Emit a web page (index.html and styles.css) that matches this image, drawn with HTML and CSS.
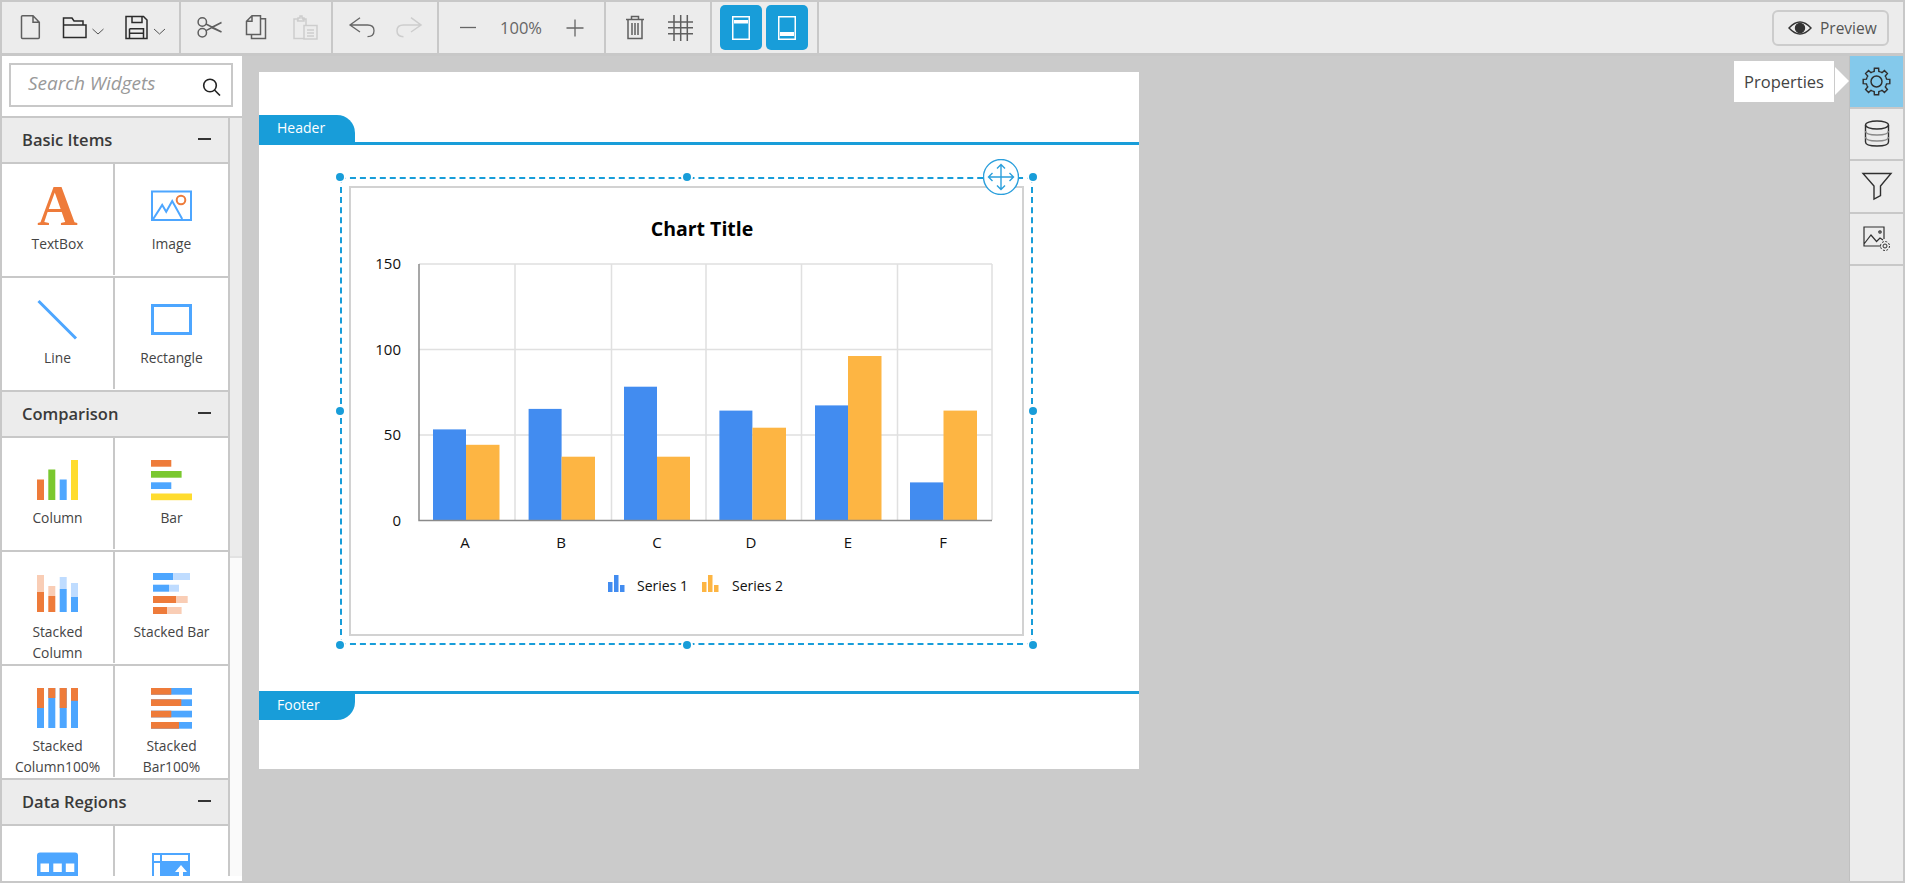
FILE: index.html
```html
<!DOCTYPE html>
<html lang="en">
<head>
<meta charset="utf-8">
<title>Report Designer</title>
<link rel="stylesheet" href="styles.css">
</head>
<body>
<div class="app">
  <header class="toolbar">
    <div class="tb-group g1">
      <svg class="i-new ic" viewBox="0 0 22 26"><path d="M2.5 .8H13L19.3 7.2V22.6Q19.3 23.6 18.3 23.6H2.5Q1.5 23.6 1.5 22.6V1.8Q1.5 .8 2.5 .8ZM13 .8V7.2H19.3"/></svg>
      <svg class="i-open ic-dark" viewBox="0 0 44 26"><path d="M2.5 22.5V3H11L13 6H22V10M2.5 10H25V22.5H2.5Z"/><path class="chev" d="M31.5 14L37 19L42.5 14"/></svg>
      <svg class="i-save ic-dark" viewBox="0 0 43 26"><path d="M2 1.5H19.5L23 5V23.5H2ZM8 1.5V7.5H18V1.5M5.5 13.7H19.5V23.5M5.5 13.7V23.5M5.5 18.3H19.5"/><path class="chev" d="M30 14L35.5 19L41 14"/></svg>
    </div>
    <div class="tb-group g2">
      <svg class="i-cut ic" viewBox="0 0 27 26"><circle cx="6.3" cy="7" r="4.2"/><circle cx="6.3" cy="17.7" r="4.2"/><path d="M10 9L25.5 17L15 12.2M10 15.7L25.5 7.5L15 12.6"/></svg>
      <svg class="i-copy ic" viewBox="0 0 24 26"><path d="M7 .8H15.5V19.5H1.5V6.3ZM7 .8V6.3H1.5M15.5 3.8H20.5V23.6H6.5V19.5"/></svg>
      <svg class="i-paste ic-off" viewBox="0 0 28 26"><path d="M7 4H3V23.5H13M15 10V4H11M7 5.5V3H9V1H11V3H13V6H6ZM13 10.5H26V24H13ZM16 15H23M16 18H23M16 21H23"/></svg>
    </div>
    <div class="tb-group g3">
      <svg class="i-arrow ic-thin" viewBox="0 0 28 26"><path d="M12 2.7L2 10L12 17M2.5 10H19.5Q26 10 26 15.7T19.5 21.7"/></svg>
      <svg class="i-arrow ic-off" viewBox="0 0 28 26"><path d="M16 2.7L26 10L16 17M25.500 10H8.500Q2 10 2 15.700T8.500 21.700"/></svg>
    </div>
    <div class="tb-group g4">
      <svg class="i-minus ic-thin" viewBox="0 0 20 26"><path d="M2 12.500H18"/></svg>
      <span class="zoom-val">100%</span>
      <svg class="i-plus ic-thin" viewBox="0 0 22 26"><path d="M2.500 13H19.500M11 4.500V21.500"/></svg>
    </div>
    <div class="tb-group g5">
      <svg class="i-trash ic" viewBox="0 0 20 25"><path d="M1 4.500H19M6.500 4V1.500H13.500V4M3 4.500V23.500H17V4.500M7 8V20M10 8V20M13 8V20"/></svg>
      <svg class="i-grid ic" viewBox="0 0 25 26"><path d="M6 0V26M12.700 0V26M19.300 0V26M0 7H25M0 12.700H25M0 18.700H25"/></svg>
    </div>
    <div class="tb-group g6">
      <button class="view-btn"><svg class="i-view" viewBox="0 0 18 24"><rect class="view-frame" x=".75" y=".75" width="16.500" height="22.500"/><rect class="view-bar" x="2" y="4" width="14" height="3.500"/></svg></button>
      <button class="view-btn"><svg class="i-view" viewBox="0 0 18 24"><rect class="view-frame" x=".75" y=".75" width="16.500" height="22.500"/><rect class="view-bar" x="2" y="16" width="14" height="4"/></svg></button>
    </div>
    <div class="tb-fill">
      <button class="preview">
        <svg class="i-eye" viewBox="0 0 24 16"><path d="M1 8Q12 -4 23 8Q12 20 1 8Z"/><circle cx="12" cy="8" r="4.500"/></svg>
        <span>Preview</span>
      </button>
    </div>
  </header>

  <div class="main">
    <aside class="sidebar">
      <div class="search-wrap">
        <div class="search">
          <span class="search-text">Search Widgets</span>
          <svg class="i-search" viewBox="0 0 20 18"><circle cx="8" cy="7.500" r="6.300"/><path d="M12.500 12L18 17.500"/></svg>
        </div>
      </div>
      <div class="palette">
        <div class="groups">
          <div class="group-head"><span>Basic Items</span><i class="collapse"></i></div>
          <div class="row">
            <div class="cell"><svg class="wi" viewBox="0 0 41 41"><text class="wi-a" x="20.500" y="39" text-anchor="middle">A</text></svg><span class="lbl">TextBox</span></div>
            <div class="cell"><svg class="wi" viewBox="0 0 41 41"><rect class="s-blue" x="1" y="5.500" width="39" height="28.500"/><path class="s-blue" d="M2.200 33L11.200 19L15.200 25.700L21.200 15L31.200 33"/><circle class="s-orange" cx="30" cy="14" r="4.300"/></svg><span class="lbl">Image</span></div>
          </div>
          <div class="row">
            <div class="cell"><svg class="wi" viewBox="0 0 41 41"><path class="s-blue3" d="M1.500 1L39 38.500"/></svg><span class="lbl">Line</span></div>
            <div class="cell"><svg class="wi" viewBox="0 0 41 41"><rect class="s-blue3" x="1.500" y="5.500" width="38" height="28"/></svg><span class="lbl">Rectangle</span></div>
          </div>
          <div class="group-head"><span>Comparison</span><i class="collapse"></i></div>
          <div class="row">
            <div class="cell"><svg class="wi" viewBox="0 0 41 41"><rect class="f-orange" x="0" y="19.500" width="7" height="20.500"/><rect class="f-green" x="11.300" y="9.500" width="7" height="30.500"/><rect class="f-blue" x="22.700" y="19.500" width="7" height="20.500"/><rect class="f-yellow" x="34" y="0" width="7" height="40"/></svg><span class="lbl">Column</span></div>
            <div class="cell"><svg class="wi" viewBox="0 0 41 41"><rect class="f-orange" y="0" width="20.300" height="6.700"/><rect class="f-green" y="11" width="30.600" height="6.700"/><rect class="f-blue" y="22.300" width="20.300" height="6.700"/><rect class="f-yellow" y="33.500" width="41" height="6.700"/></svg><span class="lbl">Bar</span></div>
          </div>
          <div class="row">
            <div class="cell"><svg class="wi" viewBox="0 0 41 41"><rect class="f-orange-l" x="0" y="1" width="7" height="17"/><rect class="f-orange" x="0" y="18" width="7" height="20"/><rect class="f-orange-l" x="11.300" y="12" width="7" height="10"/><rect class="f-orange" x="11.300" y="22" width="7" height="16"/><rect class="f-blue-l" x="22.700" y="3" width="7" height="12"/><rect class="f-blue" x="22.700" y="15" width="7" height="23"/><rect class="f-blue-l" x="34" y="9" width="7" height="14"/><rect class="f-blue" x="34" y="23" width="7" height="15"/></svg><span class="lbl">Stacked<br>Column</span></div>
            <div class="cell"><svg class="wi wi-sb" viewBox="0 0 41 41"><rect class="f-blue" x="2" y="-1" width="20.300" height="7"/><rect class="f-blue-l" x="22.300" y="-1" width="16.700" height="7"/><rect class="f-blue" x="2" y="10.700" width="16" height="7"/><rect class="f-blue-l" x="18" y="10.700" width="10" height="7"/><rect class="f-orange" x="2" y="22" width="23" height="7"/><rect class="f-orange-l" x="25" y="22" width="11.700" height="7"/><rect class="f-orange" x="2" y="33" width="14.300" height="7"/><rect class="f-orange-l" x="16.300" y="33" width="14.300" height="7"/></svg><span class="lbl">Stacked Bar</span></div>
          </div>
          <div class="row">
            <div class="cell"><svg class="wi" viewBox="0 0 41 41"><rect class="f-blue" x="0" y="0" width="7" height="40"/><rect class="f-orange" x="0" y="0" width="7" height="20"/><rect class="f-blue" x="11.300" y="0" width="7" height="40"/><rect class="f-orange" x="11.300" y="0" width="7" height="10"/><rect class="f-blue" x="22.700" y="0" width="7" height="40"/><rect class="f-orange" x="22.700" y="0" width="7" height="20"/><rect class="f-blue" x="34" y="0" width="7" height="40"/><rect class="f-orange" x="34" y="0" width="7" height="12.800"/></svg><span class="lbl">Stacked<br>Column100%</span></div>
            <div class="cell"><svg class="wi" viewBox="0 0 41 41"><rect class="f-blue" y="0" width="41" height="6.700"/><rect class="f-orange" y="0" width="20.300" height="6.700"/><rect class="f-blue" y="11.300" width="41" height="6.700"/><rect class="f-orange" y="11.300" width="30.300" height="6.700"/><rect class="f-blue" y="22.700" width="41" height="6.700"/><rect class="f-orange" y="22.700" width="20.300" height="6.700"/><rect class="f-blue" y="34" width="41" height="6.700"/><rect class="f-orange" y="34" width="28" height="6.700"/></svg><span class="lbl">Stacked<br>Bar100%</span></div>
          </div>
          <div class="group-head"><span>Data Regions</span><i class="collapse"></i></div>
          <div class="row">
            <div class="cell"><svg class="wi" viewBox="0 0 41 41"><rect class="f-blue" x="0" y="4.500" width="41" height="36" rx="3"/><path class="f-white" d="M3.500 15.500H12V24H3.500ZM16.300 15.500H24.800V24H16.300ZM28.800 15.500H37.300V24H28.800ZM3.500 28H12V36H3.500ZM16.300 28H24.800V36H16.300ZM28.800 28H37.300V36H28.800Z"/></svg></div>
            <div class="cell"><svg class="wi" viewBox="0 0 41 41"><rect class="f-blue" x="1" y="5" width="38" height="36"/><path class="f-white" d="M3 7H9V13H3ZM11 7H37V13H11ZM3 15H9V40H3ZM30 17L36 24H32V34H28V24H24Z"/></svg></div>
          </div>
        </div>
        <div class="scrolltrack"><div class="scrollthumb"></div></div>
      </div>
    </aside>

    <main class="canvas">
      <div class="page">
        <div class="band-top"></div>
        <div class="band-head"><div class="tab tab-head">Header</div></div>
        <div class="body-area">
          <div class="selection">
            <i class="handle h-tl"></i><i class="handle h-tc"></i><i class="handle h-tr"></i>
            <i class="handle h-ml"></i><i class="handle h-mr"></i>
            <i class="handle h-bl"></i><i class="handle h-bc"></i><i class="handle h-br"></i>
            <div class="chart-box">
              <svg class="chart" viewBox="351 188 671 446">
                <text class="c-title" x="702" y="236" text-anchor="middle">Chart Title</text>
                <path class="grid-line" d="M419 264H992M419 349.500H992M419 435H992M515 264V520M611.500 264V520M706 264V520M801.500 264V520M897.500 264V520M992 264V520"/>
                <g class="b1">
                  <rect x="433" y="429.400" width="33" height="90.600"/><rect x="528.600" y="408.900" width="33" height="111.100"/><rect x="624" y="386.700" width="33" height="133.300"/><rect x="719.400" y="410.600" width="33" height="109.400"/><rect x="815" y="405.400" width="33" height="114.600"/><rect x="910" y="482.400" width="33.500" height="37.600"/>
                </g>
                <g class="b2">
                  <rect x="466" y="444.800" width="33.500" height="75.200"/><rect x="561.600" y="456.700" width="33.400" height="63.300"/><rect x="657" y="456.700" width="33" height="63.300"/><rect x="752.400" y="427.700" width="33.600" height="92.300"/><rect x="848" y="356" width="33.500" height="164"/><rect x="943.500" y="410.600" width="33.500" height="109.400"/>
                </g>
                <path class="axis-line" d="M419 264V520.500H992"/>
                <g class="c-axis" text-anchor="end">
                  <text x="401" y="269">150</text><text x="401" y="354.500">100</text><text x="401" y="440">50</text><text x="401" y="525.500">0</text>
                </g>
                <g class="c-axis" text-anchor="middle">
                  <text x="465" y="548">A</text><text x="561" y="548">B</text><text x="657" y="548">C</text><text x="751" y="548">D</text><text x="848" y="548">E</text><text x="943" y="548">F</text>
                </g>
                <g class="b1"><rect x="608" y="582" width="4.500" height="10"/><rect x="614" y="575" width="4.500" height="17"/><rect x="620" y="585" width="4.500" height="7"/></g>
                <g class="b2"><rect x="702" y="582" width="4.500" height="10"/><rect x="708" y="575" width="4.500" height="17"/><rect x="714" y="585" width="4.500" height="7"/></g>
                <text class="c-legend" x="637" y="591">Series 1</text>
                <text class="c-legend" x="732" y="591">Series 2</text>
              </svg>
            </div>
            <div class="mover">
              <svg class="i-move" viewBox="0 0 36 36"><circle cx="18" cy="18" r="17.500"/><path d="M18 6V30M6 18H30M14 9.500L18 5.500L22 9.500M14 26.500L18 30.500L22 26.500M9.500 14L5.500 18L9.500 22M26.500 14L30.500 18L26.500 22"/></svg>
            </div>
          </div>
        </div>
        <div class="band-foot"><div class="tab tab-foot">Footer</div></div>
      </div>
      <div class="tooltip">Properties</div>
    </main>

    <nav class="rail">
      <div class="rail-item active">
        <svg class="i-gear" viewBox="-14 -14 28 28"><defs><path id="tooth" d="M-3.830 -9.240L-2.250 -9.740L-2.030 -12.840H2.030L2.250 -9.740L3.830 -9.240"/></defs><use href="#tooth"/><use href="#tooth" transform="rotate(45)"/><use href="#tooth" transform="rotate(90)"/><use href="#tooth" transform="rotate(135)"/><use href="#tooth" transform="rotate(180)"/><use href="#tooth" transform="rotate(225)"/><use href="#tooth" transform="rotate(270)"/><use href="#tooth" transform="rotate(315)"/><circle r="5.300"/></svg>
      </div>
      <div class="rail-item">
        <svg class="i-db" viewBox="0 0 26 27"><ellipse cx="13" cy="5" rx="11.500" ry="4"/><path d="M1.500 5V22Q1.500 26 13 26T24.500 22V5"/><path class="db-soft" d="M1.500 11Q1.500 15 13 15T24.500 11M1.500 17Q1.500 21 13 21T24.500 17"/></svg>
      </div>
      <div class="rail-item">
        <svg class="i-funnel" viewBox="0 0 30 28"><path d="M1 1.500H29L18.500 14V23.500L12 27V14Z"/></svg>
      </div>
      <div class="rail-item">
        <svg class="i-imgset" viewBox="0 0 28 26"><path d="M18 20H1V1H21V13M1 18L8 9L14 16M14 15L17 12L20 14"/><circle cx="17" cy="6" r="1.200"/><g class="i-imgset-g" transform="translate(22 20)"><circle r="2"/><circle r="4.500" stroke-dasharray="2 1.500"/></g></svg>
      </div>
    </nav>
  </div>
</div>
</body>
</html>
```
FILE: styles.css
```css
* { box-sizing: border-box; }
html, body { margin: 0; padding: 0; height: 100%; overflow: hidden; }
body { font-family: "Open Sans", "Noto Sans", sans-serif; color: #333; background: #cbcbcb; }

.app { width: 1905px; height: 883px; border: 2px solid #c8c8c8; display: flex; flex-direction: column; }

/* toolbar */
.toolbar { height: 54px; flex: none; background: #ececec; border-bottom: 3px solid #c8c8c8; display: flex; align-items: stretch; }
.tb-group { display: flex; align-items: center; border-right: 2px solid #c8c8c8; flex: none; }
.g1 { width: 179px; padding-left: 18px; gap: 19px; }
.g2 { width: 152px; padding-left: 15px; gap: 22px; }
.g3 { width: 106px; padding-left: 15px; gap: 19px; }
.g4 { width: 167px; padding-left: 19px; gap: 20px; }
.g5 { width: 106px; padding-left: 19px; gap: 23px; }
.g6 { width: 107px; padding-left: 8px; gap: 4px; }
.tb-fill { flex: 1; display: flex; align-items: center; justify-content: flex-end; padding-right: 14px; }

.ic, .ic-dark, .ic-off, .ic-thin { fill: none; flex: none; }
.ic { stroke: #5f5f5f; stroke-width: 1.5; }
.ic-dark { stroke: #2b2b2b; stroke-width: 1.5; }
.ic-off { stroke: #cdcdcd; stroke-width: 1.5; }
.ic-thin { stroke: #666; stroke-width: 1.3; }
.chev { stroke: #555; stroke-width: 1; }
.i-new { width: 22px; height: 26px; }
.i-open { width: 44px; height: 26px; }
.i-save { width: 43px; height: 26px; }
.i-cut { width: 27px; height: 26px; }
.i-copy { width: 24px; height: 26px; }
.i-paste { width: 28px; height: 26px; }
.i-arrow { width: 28px; height: 26px; }
.i-minus { width: 20px; height: 26px; }
.i-plus { width: 22px; height: 26px; }
.i-trash { width: 20px; height: 25px; }
.i-grid { width: 25px; height: 26px; }
.zoom-val { width: 46px; font-size: 16.5px; color: #666; text-align: center; line-height: 26px; }

.view-btn { width: 42px; height: 45px; padding: 0; border: 0; border-radius: 5px; background: #189dd9; display: flex; align-items: center; justify-content: center; }
.i-view { width: 18px; height: 24px; }
.view-frame { fill: none; stroke: #fff; stroke-width: 1.5; }
.view-bar { fill: #fff; }

.preview { width: 117px; height: 36px; padding: 0 0 0 14px; background: #ececec; border: 2px solid #ccc; border-radius: 6px; display: flex; align-items: center; gap: 8px; font: 15.5px "Open Sans", "Noto Sans", sans-serif; color: #555; }
.i-eye { width: 24px; height: 16px; fill: none; stroke: #333; stroke-width: 1.4; }
.i-eye circle { fill: #333; }

/* main */
.main { flex: 1; display: flex; min-height: 0; }

/* sidebar */
.sidebar { width: 240px; flex: none; background: #fff; display: flex; flex-direction: column; padding-bottom: 5px; }
.search-wrap { height: 62px; flex: none; padding: 7px 7px 9px 7px; border-bottom: 2px solid #c8c8c8; }
.search { height: 44px; width: 224px; border: 2px solid #c8c8c8; display: flex; align-items: center; justify-content: space-between; padding: 0 9px 0 17px; }
.search-text { font-size: 19px; font-style: italic; color: #999; padding-bottom: 4px; line-height: 26px; white-space: nowrap; }
.i-search { width: 20px; height: 18px; fill: none; stroke: #222; stroke-width: 1.6; margin-top: 3px; flex: none; }

.palette { flex: 1; display: flex; min-height: 0; overflow: hidden; }
.groups { width: 228px; flex: none; border-right: 2px solid #c8c8c8; }
.group-head { height: 46px; background: #ececec; border-bottom: 2px solid #c8c8c8; display: flex; align-items: center; justify-content: space-between; padding: 0 17px 2px 20px; font-size: 16.5px; font-weight: 600; color: #3a3a3a; }
.collapse { width: 13px; height: 2px; background: #333; }

.row { height: 114px; display: grid; grid-template-columns: 113px 113px; padding-bottom: 1px; border-bottom: 2px solid #c8c8c8; }
.cell { height: 111px; padding-top: 22px; display: flex; flex-direction: column; align-items: center; overflow: hidden; }
.cell:first-child { border-right: 2px solid #c8c8c8; }
.wi { width: 41px; height: 41px; flex: none; overflow: visible; }
.lbl { margin-top: 6px; font-size: 13.8px; line-height: 21px; text-align: center; color: #444; white-space: nowrap; }

.wi-a { font-family: "Liberation Serif", serif; font-weight: 700; font-size: 56px; fill: #ee7b3a; }
.s-blue { fill: none; stroke: #4da6ff; stroke-width: 2; }
.s-blue3 { fill: none; stroke: #4da6ff; stroke-width: 3; }
.s-orange { fill: none; stroke: #ee7b3a; stroke-width: 2; }
.f-orange { fill: #ee7b3a; }
.f-orange-l { fill: #f9cdb5; }
.f-green { fill: #7ac82f; }
.f-blue { fill: #4da6ff; }
.f-blue-l { fill: #bfdcff; }
.f-yellow { fill: #ffdc2e; }
.f-white { fill: #fff; }

.scrolltrack { width: 12px; flex: none; background: #fafafa; }
.scrollthumb { height: 440px; background: #ececec; border-bottom: 2px solid #e2e2e2; }

/* canvas */
.canvas { flex: 1; min-width: 0; position: relative; background: #cbcbcb; padding: 16px 0 0 17px; overflow: hidden; }
.page { width: 880px; height: 697px; background: #fff; display: flex; flex-direction: column; }
.band-top { height: 43px; flex: none; }
.band-head { height: 30px; flex: none; display: flex; align-items: flex-end; border-bottom: 3px solid #189dd9; }
.band-foot { height: 78px; flex: none; border-top: 3px solid #189dd9; }
.tab { width: 96px; background: #189dd9; color: #fff; font-size: 14px; padding-left: 18px; display: flex; align-items: center; }
.tab-head { height: 30px; margin-bottom: -3px; border-radius: 0 18px 0 0; padding-bottom: 5px; }
.tab-foot { height: 29px; margin-top: -3px; border-radius: 0 0 18px 0; padding-bottom: 2px; }
.body-area { height: 546px; flex: none; padding: 32px 0 0 81px; }

.selection { width: 693px; height: 468px; border: 2px dashed #189dd9; padding: 7px; position: relative; }
.chart-box { width: 675px; height: 450px; border: 2px solid #d2d2d2; }
.chart { display: block; width: 671px; height: 446px; }
.handle { position: absolute; width: 8px; height: 8px; border-radius: 50%; background: #189dd9; box-shadow: 0 0 0 2px #fff; }
.h-tl { left: -6px; top: -6px; }
.h-tc { left: 341px; top: -6px; }
.h-tr { right: -6px; top: -6px; }
.h-ml { left: -6px; top: 228px; }
.h-mr { right: -6px; top: 228px; }
.h-bl { left: -6px; bottom: -6px; }
.h-bc { left: 341px; bottom: -6px; }
.h-br { right: -6px; bottom: -6px; }
.mover { position: absolute; right: 12px; top: -20px; width: 36px; height: 36px; }
.i-move { display: block; width: 36px; height: 36px; fill: none; stroke: #2b9fdc; stroke-width: 1.4; }
.i-move circle { fill: #fff; }

.c-title { font-size: 19.5px; font-weight: 700; fill: #000; }
.c-axis { font-size: 15px; fill: #111; }
.c-legend { font-size: 14px; fill: #111; }
.grid-line { fill: none; stroke: #e0e0e0; stroke-width: 1.5; }
.axis-line { fill: none; stroke: #8a8a8a; stroke-width: 1.5; }
.b1 { fill: #428cf0; }
.b2 { fill: #fdb543; }

.tooltip { position: absolute; right: 15px; top: 5px; width: 100px; height: 41px; background: #fff; display: flex; align-items: center; justify-content: center; font-size: 16.500px; color: #444; }
.tooltip::after { content: ""; position: absolute; left: 100%; top: 6px; margin-left: 1px; border-left: 14px solid #fff; border-top: 14px solid transparent; border-bottom: 14px solid transparent; }

/* right rail */
.rail { width: 54px; flex: none; background: #ececec; display: flex; flex-direction: column; border-left: 1px solid #c0c0c0; }
.rail-item { height: 52.500px; flex: none; border-bottom: 2px solid #c8c8c8; display: flex; align-items: center; justify-content: center; }
.rail-item.active { background: #84c9eb; }
.i-gear, .i-db, .i-funnel, .i-imgset { fill: none; stroke: #2f2f2f; stroke-width: 1.4; overflow: visible; }
.i-gear { width: 29px; height: 29px; }
.i-db { width: 26px; height: 27px; }
.db-soft { stroke: #8a8a8a; }
.i-funnel { width: 30px; height: 28px; }
.i-imgset { width: 28px; height: 26px; stroke-width: 1.2; }
.i-imgset-g { stroke-width: 1; }
```
